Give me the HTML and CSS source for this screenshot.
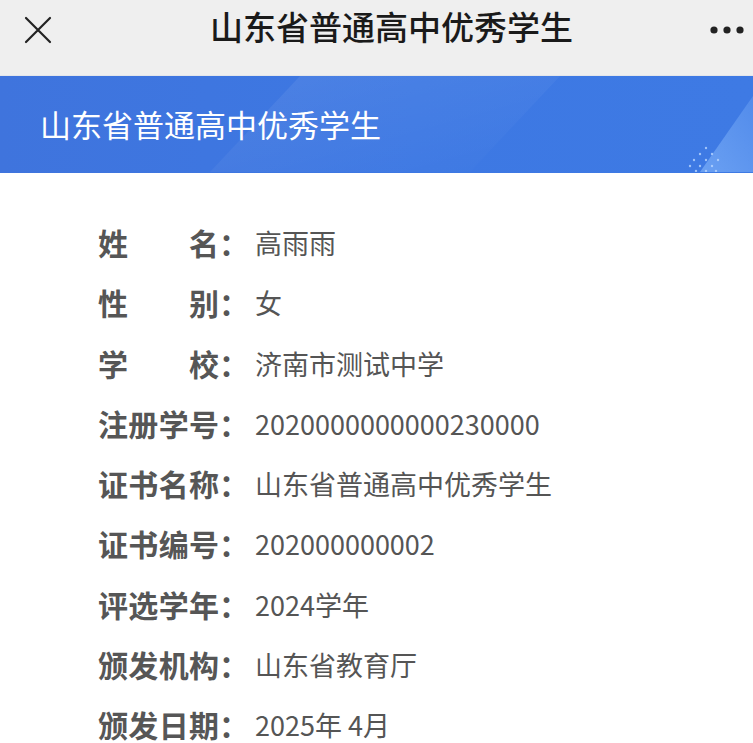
FILE: index.html
```html
<!DOCTYPE html>
<html lang="zh">
<head>
<meta charset="utf-8">
<link rel="stylesheet" href="styles.css">
</head>
<body>
<header class="nav">
  <span class="nav-close">
    <svg width="28" height="28" viewBox="0 0 28 28"><path d="M2 2 L26 26 M26 2 L2 26" stroke="#222" stroke-width="2.2" fill="none" stroke-linecap="round"/></svg>
  </span>
  <h1 class="nav-title">山东省普通高中优秀学生</h1>
  <span class="nav-more">
    <svg width="36" height="10" viewBox="0 0 36 10"><circle cx="5" cy="5" r="3.6" fill="#222"/><circle cx="18" cy="5" r="3.6" fill="#222"/><circle cx="31" cy="5" r="3.6" fill="#222"/></svg>
  </span>
</header>
<section class="banner">
  <h2 class="banner-title">山东省普通高中优秀学生</h2>
  <svg class="banner-deco" width="753" height="96" viewBox="0 0 753 96" preserveAspectRatio="none">
    <defs>
      <linearGradient id="g1" x1="0" y1="0" x2="1" y2="1">
        <stop offset="0" stop-color="#ffffff" stop-opacity="0.08"/>
        <stop offset="1" stop-color="#ffffff" stop-opacity="0"/>
      </linearGradient>
      <linearGradient id="g2" x1="0" y1="1" x2="1" y2="0">
        <stop offset="0" stop-color="#8fc0ff" stop-opacity="0.55"/>
        <stop offset="1" stop-color="#8fc0ff" stop-opacity="0.25"/>
      </linearGradient>
    </defs>
    <polygon points="210,96 300,0 560,0 470,96" fill="url(#g1)"/>
    <polygon points="700,96 753,20 753,96" fill="url(#g2)"/>
    <g fill="#b9d6ff" opacity="0.8">
      <circle cx="706" cy="72" r="1.2"/><circle cx="700" cy="78" r="1.2"/><circle cx="712" cy="78" r="1.2"/>
      <circle cx="694" cy="84" r="1.2"/><circle cx="706" cy="84" r="1.2"/><circle cx="718" cy="84" r="1.2"/>
      <circle cx="700" cy="90" r="1.2"/><circle cx="712" cy="90" r="1.2"/><circle cx="690" cy="90" r="1.2"/>
      <circle cx="706" cy="95" r="1.2"/><circle cx="696" cy="95" r="1.2"/><circle cx="716" cy="95" r="1.2"/>
    </g>
  </svg>
</section>
<main class="info">
  <div class="row"><span class="label">姓名</span><span class="colon">：</span><span class="value">高雨雨</span></div>
  <div class="row"><span class="label">性别</span><span class="colon">：</span><span class="value">女</span></div>
  <div class="row"><span class="label">学校</span><span class="colon">：</span><span class="value">济南市测试中学</span></div>
  <div class="row"><span class="label">注册学号</span><span class="colon">：</span><span class="value">2020000000000230000</span></div>
  <div class="row"><span class="label">证书名称</span><span class="colon">：</span><span class="value">山东省普通高中优秀学生</span></div>
  <div class="row"><span class="label">证书编号</span><span class="colon">：</span><span class="value">202000000002</span></div>
  <div class="row"><span class="label">评选学年</span><span class="colon">：</span><span class="value">2024学年</span></div>
  <div class="row"><span class="label">颁发机构</span><span class="colon">：</span><span class="value">山东省教育厅</span></div>
  <div class="row"><span class="label">颁发日期</span><span class="colon">：</span><span class="value">2025年 4月</span></div>
</main>
</body>
</html>
```

FILE: styles.css
```css
* { box-sizing: border-box; }
html, body {
  margin: 0;
  padding: 0;
  background: #ffffff;
  font-family: "Noto Sans CJK SC", "Noto Sans", sans-serif;
}
body {
  width: 753px;
}
.nav {
  height: 76px;
  background: #efefef;
  display: flex;
  align-items: center;
  justify-content: space-between;
  padding: 0 8px 16px 24px;
  border-bottom: 1px solid #e4e6ea;
  position: relative;
}
.nav-close { display: flex; width: 28px; height: 28px; }
.nav-more { display: flex; }
.nav-title {
  margin: 0;
  font-size: 33px;
  font-weight: 500;
  color: #1a1a1a;
  position: absolute;
  left: 30px;
  right: 0;
  top: 2px;
  text-align: center;
  pointer-events: none;
}
.banner {
  position: relative;
  height: 97px;
  background: linear-gradient(90deg, #3f74dd 0%, #3d78e3 55%, #3e7ae4 100%);
  display: flex;
  align-items: center;
  padding-left: 40px;
  overflow: hidden;
}
.banner-title {
  margin: 0 0 2px 0;
  font-size: 31px;
  font-weight: 400;
  color: #ffffff;
  position: relative;
  z-index: 1;
}
.banner-deco {
  position: absolute;
  left: 0;
  top: 0;
}
.info {
  padding: 53px 0 0 98px;
  display: flex;
  flex-direction: column;
  gap: 27.3px;
}
.row {
  height: 33px;
  display: flex;
  align-items: center;
  color: #555555;
  line-height: 33px;
}
.label {
  width: 121px;
  font-size: 30px;
  font-weight: 700;
  text-align: justify;
  text-align-last: justify;
  color: #565656;
}
.colon {
  width: 36px;
  font-size: 30px;
  font-weight: 700;
  color: #565656;
}
.value {
  font-size: 27px;
  font-weight: 400;
  color: #555555;
  white-space: nowrap;
}
```
